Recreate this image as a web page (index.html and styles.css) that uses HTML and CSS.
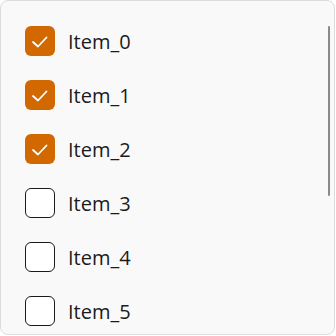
FILE: index.html
```html
<!DOCTYPE html>
<html>
<head>
<meta charset="utf-8">
<link rel="stylesheet" href="styles.css">
</head>
<body>
<div class="panel">
  <ul class="list">
    <li class="row"><span class="box checked"><svg viewBox="0 0 30 30" width="30" height="30"><path d="M8 16 L13 20.5 L21.5 11.5" fill="none" stroke="#fff" stroke-width="1.8" stroke-linecap="round" stroke-linejoin="round"/></svg></span><span class="label">Item_0</span></li>
    <li class="row"><span class="box checked"><svg viewBox="0 0 30 30" width="30" height="30"><path d="M8 16 L13 20.5 L21.5 11.5" fill="none" stroke="#fff" stroke-width="1.8" stroke-linecap="round" stroke-linejoin="round"/></svg></span><span class="label">Item_1</span></li>
    <li class="row"><span class="box checked"><svg viewBox="0 0 30 30" width="30" height="30"><path d="M8 16 L13 20.5 L21.5 11.5" fill="none" stroke="#fff" stroke-width="1.8" stroke-linecap="round" stroke-linejoin="round"/></svg></span><span class="label">Item_2</span></li>
    <li class="row"><span class="box"></span><span class="label">Item_3</span></li>
    <li class="row"><span class="box"></span><span class="label">Item_4</span></li>
    <li class="row"><span class="box"></span><span class="label">Item_5</span></li>
  </ul>
  <div class="scrollbar"></div>
</div>
</body>
</html>
```
FILE: styles.css
```css
html, body {
  margin: 0;
  padding: 0;
  background: #ffffff;
}
.panel {
  position: relative;
  width: 335px;
  height: 335px;
  box-sizing: border-box;
  border: 1px solid #dcdcdc;
  border-radius: 8px;
  background: #f9f9f9;
  overflow: hidden;
  font-family: "Open Sans", "Noto Sans", sans-serif;
}
.list {
  list-style: none;
  margin: 0;
  padding: 13px 0 0 24px;
}
.row {
  display: flex;
  align-items: center;
  height: 54px;
}
.box {
  width: 30px;
  height: 30px;
  box-sizing: border-box;
  border: 1.5px solid #1b1b1b;
  border-radius: 6px;
  background: #ffffff;
  flex: none;
  display: flex;
}
.box.checked {
  border: none;
  background: #d26900;
}
.label {
  margin-left: 13px;
  font-size: 20px;
  color: #1b1b1b;
}
.scrollbar {
  position: absolute;
  top: 25px;
  right: 4px;
  width: 2px;
  height: 170px;
  background: #8a8a8a;
  border-radius: 1px;
}
```
